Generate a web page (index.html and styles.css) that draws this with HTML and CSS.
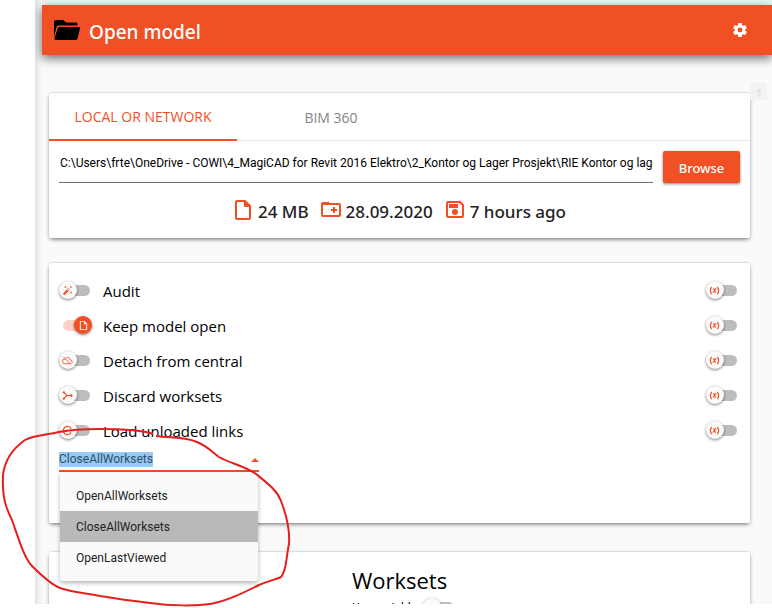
FILE: index.html
```html
<!DOCTYPE html>
<html lang="en">
<head>
<meta charset="utf-8">
<title>Open model</title>
<link rel="stylesheet" href="styles.css">
</head>
<body>
<svg class="sprite" aria-hidden="true">
  <symbol id="file" viewBox="0 0 24 24"><path fill-rule="evenodd" d="M6 2h8l6 6v12a2 2 0 0 1-2 2H6a2 2 0 0 1-2-2V4a2 2 0 0 1 2-2zm0 2v16h12V9h-5V4z"/></symbol>
  <symbol id="wand" viewBox="0 0 24 24"><path d="M7.500 5.600 5 7l1.400-2.500L5 2l2.500 1.400L10 2 8.600 4.500 10 7zM19.500 15.400 22 14l-1.400 2.500L22 19l-2.500-1.400L17 19l1.400-2.500L17 14zM22 2l-1.400 2.500L22 7l-2.500-1.400L17 7l1.400-2.500L17 2l2.500 1.400zM13.300 12.800l2.500-2.500-2.100-2.100-2.500 2.500zm1-5.500 2.400 2.400c.4.400.4 1 0 1.400L5.700 21.700c-.4.400-1 .4-1.400 0l-2-2c-.4-.4-.4-1 0-1.400L13 7.300c.3-.4.900-.4 1.300 0z"/></symbol>
  <symbol id="cloud" viewBox="0 0 24 24"><path fill="none" stroke="currentColor" stroke-width="2" d="M7.500 9H6a5 5 0 0 0 0 10h11M9.500 5.600A6.500 6.500 0 0 1 18.300 11a4 4 0 0 1 2.500 7M3 4l17 17"/></symbol>
  <symbol id="branch" viewBox="0 0 24 24"><path fill="none" stroke="currentColor" stroke-width="2.500" d="M4 5l7 7-7 7M11 12h9"/><circle cx="4" cy="5" r="2.500"/><circle cx="4" cy="19" r="2.500"/><circle cx="20" cy="12" r="3"/></symbol>
  <symbol id="reload" viewBox="0 0 24 24"><path fill="none" stroke="currentColor" stroke-width="2.500" d="M20 8a9 9 0 1 0 0 8M7 12h10"/></symbol>
  <symbol id="variable" viewBox="0 0 24 24"><path fill="none" stroke="currentColor" stroke-width="2.500" d="M6 4q-6 8 0 16M18 4q6 8 0 16M9 8q2 0 3 4t3 4M16 8q-2 0-4 4t-4 4"/></symbol>
</svg>

<div class="window">
  <header class="app-bar">
    <svg class="folder" viewBox="0 0 28 22" aria-hidden="true"><path d="M3 1h7.500l2.500 2.500h10A1.500 1.500 0 0 1 24.500 5v1.500H5.500a2 2 0 0 0-2 1.500L1 18V3a2 2 0 0 1 2-2z"/><path d="M6.500 8H26a1 1 0 0 1 1 1.300l-2.400 10.200A2 2 0 0 1 22.700 21H3a1.500 1.500 0 0 1-1.400-2L4.700 9.300A2 2 0 0 1 6.500 8z"/></svg>
    <h1 class="title">Open model</h1>
    <button class="icon-button" type="button" aria-label="Settings">
      <svg class="gear" viewBox="2 2 20 20" aria-hidden="true"><path d="M12 15.500A3.500 3.500 0 1 1 12 8.500a3.500 3.500 0 0 1 0 7m7.430-2.530c.04-.32.070-.64.070-.970s-.03-.66-.07-1l2.110-1.630c.19-.15.240-.42.120-.64l-2-3.460c-.12-.22-.39-.31-.61-.22l-2.490 1c-.52-.39-1.060-.73-1.690-.980l-.37-2.650A.5.500 0 0 0 14 2h-4c-.25 0-.46.180-.5.420l-.37 2.650c-.63.250-1.170.590-1.690.980l-2.490-1c-.22-.09-.49 0-.61.220l-2 3.460c-.13.220-.07.490.12.640L4.570 11c-.04.340-.07.670-.07 1s.03.650.07.970l-2.110 1.660c-.19.150-.25.420-.12.640l2 3.460c.12.220.39.300.61.220l2.490-1.010c.52.400 1.060.740 1.690.990l.37 2.650c.04.240.25.420.5.420h4c.25 0 .46-.18.500-.42l.37-2.650c.63-.26 1.170-.59 1.690-.99l2.490 1.010c.22.080.49 0 .61-.22l2-3.460c.12-.22.070-.49-.12-.64z"/></svg>
    </button>
  </header>

  <div class="scroller">
    <main class="content">
      <section class="card">
        <nav class="tabs">
          <button class="tab active" type="button">LOCAL OR NETWORK</button>
          <button class="tab" type="button">BIM 360</button>
        </nav>
        <div class="path-row">
          <input class="path" type="text" aria-label="Model path" value="C:\Users\frte\OneDrive - COWI\4_MagiCAD for Revit 2016 Elektro\2_Kontor og Lager Prosjekt\RIE Kontor og lager.rvt">
          <button class="browse" type="button">Browse</button>
        </div>
        <div class="facts">
          <span class="fact"><svg class="fact-icon" viewBox="0 0 20 20" aria-hidden="true"><path fill="none" stroke="currentColor" stroke-width="2" d="M4 1h8l5 5v12a1 1 0 0 1-1 1H4a1 1 0 0 1-1-1V2a1 1 0 0 1 1-1z"/><path d="M11 1v6h6z"/></svg>24 MB</span>
          <span class="fact"><svg class="fact-icon" viewBox="0 0 20 20" aria-hidden="true"><path fill="none" stroke="currentColor" stroke-width="2" d="M2 4h16a1 1 0 0 1 1 1v10a1 1 0 0 1-1 1H2a1 1 0 0 1-1-1V4zM10 10h6M13 7v6"/><path d="M1 2h7l2 3H1z"/></svg>28.09.2020</span>
          <span class="fact"><svg class="fact-icon" viewBox="0 0 20 20" aria-hidden="true"><path fill="none" stroke="currentColor" stroke-width="2" d="M3 2h12l3 3v11a1 1 0 0 1-1 1H3a1 1 0 0 1-1-1V3a1 1 0 0 1 1-1z"/><path d="M4 4h9v4H4z"/><circle cx="10" cy="12" r="3"/></svg>7 hours ago</span>
        </div>
      </section>

      <section class="card options">
        <div class="option">
          <label class="switch-label"><span class="switch"><input type="checkbox"><svg class="glyph" aria-hidden="true"><use href="#wand"/></svg></span>Audit</label>
          <label class="switch"><input type="checkbox" aria-label="Use variable for audit"><svg class="glyph" aria-hidden="true"><use href="#variable"/></svg></label>
        </div>
        <div class="option">
          <label class="switch-label"><span class="switch"><input type="checkbox" checked><svg class="glyph" aria-hidden="true"><use href="#file"/></svg></span>Keep model open</label>
          <label class="switch"><input type="checkbox" aria-label="Use variable for keep model open"><svg class="glyph" aria-hidden="true"><use href="#variable"/></svg></label>
        </div>
        <div class="option">
          <label class="switch-label"><span class="switch"><input type="checkbox"><svg class="glyph" aria-hidden="true"><use href="#cloud"/></svg></span>Detach from central</label>
          <label class="switch"><input type="checkbox" aria-label="Use variable for detach"><svg class="glyph" aria-hidden="true"><use href="#variable"/></svg></label>
        </div>
        <div class="option">
          <label class="switch-label"><span class="switch"><input type="checkbox"><svg class="glyph" aria-hidden="true"><use href="#branch"/></svg></span>Discard worksets</label>
          <label class="switch"><input type="checkbox" aria-label="Use variable for discard worksets"><svg class="glyph" aria-hidden="true"><use href="#variable"/></svg></label>
        </div>
        <div class="option">
          <label class="switch-label"><span class="switch"><input type="checkbox"><svg class="glyph" aria-hidden="true"><use href="#reload"/></svg></span>Load unloaded links</label>
          <label class="switch"><input type="checkbox" aria-label="Use variable for load links"><svg class="glyph" aria-hidden="true"><use href="#variable"/></svg></label>
        </div>
        <div class="combo">
          <select class="combo-field" aria-label="Worksets to open">
            <option>OpenAllWorksets</option>
            <option selected>CloseAllWorksets</option>
            <option>OpenLastViewed</option>
          </select>
          <svg class="caret" viewBox="0 0 8 4" aria-hidden="true"><path d="M4 0l4 4H0z"/></svg>
          <div class="menu">
            <button class="menu-item" type="button">OpenAllWorksets</button>
            <button class="menu-item current" type="button">CloseAllWorksets</button>
            <button class="menu-item" type="button">OpenLastViewed</button>
          </div>
        </div>
      </section>

      <section class="card worksets">
        <div class="worksets-body">
          <h2 class="worksets-title">Worksets</h2>
          <label class="worksets-toggle">Use variable<span class="switch"><input type="checkbox"></span></label>
        </div>
      </section>
    </main>
    <div class="rail">
      <button class="scroll-up" type="button" aria-label="Scroll up"><svg class="arrow" viewBox="0 0 10 10" aria-hidden="true"><path d="M5 9V2M2 5l3-3 3 3"/></svg></button>
    </div>
  </div>
</div>

<svg class="annotation" viewBox="0 0 300 190" aria-hidden="true"><path d="M153 14C142 10 125 9 100 9C82 9 69 10 59 12C47 15 34 15 25 20C15 27 5 38 3 55C2 78 6 88 12 100C18 117 24 138 32 146C38 152 50 164 60 168C75 173 86 173 100 176C118 179 133 181 150 183C171 186 197 186 210 184C227 181 243 173 259 165C268 161 277 159 281 157C287 150 286 137 289 124C290 111 286 94 281 81C277 70 267 63 256 54C245 46 229 43 219 37C211 31 207 26 197 22C186 17 171 18 156 16"/></svg>
</body>
</html>
```

FILE: styles.css
```css
* {
  box-sizing: border-box;
}

body {
  margin: 0;
  height: 100vh;
  overflow: hidden;
  position: relative;
  padding: 0 0 4px 35px;
  background: #fff;
  color: #000;
  font: 15px/20px "Open Sans", "Noto Sans", sans-serif;
}

button,
input,
select {
  font: inherit;
  color: inherit;
  border: 0;
  margin: 0;
  padding: 0;
  background: none;
}

svg {
  fill: currentColor;
}

.sprite {
  position: absolute;
  width: 0;
  height: 0;
}

.window {
  display: flex;
  flex-direction: column;
  height: 100%;
  overflow: hidden;
  padding: 5px 0 0 7px;
  background: #fafafa;
  box-shadow: inset 5px 0 5px -2px #e0e0e0;
}

.app-bar {
  display: flex;
  align-items: center;
  flex: none;
  height: 50px;
  padding: 0 25px 0 11px;
  background: #f15025;
  color: #fff;
  box-shadow: 0 3px 10px rgba(0, 0, 0, 0.6);
}

.folder {
  width: 28px;
  height: 22px;
  color: #000;
}

.title,
.facts,
.browse {
  font-family: "Noto Sans", "Open Sans", sans-serif;
  font-weight: 500;
}

.title {
  margin: 3px 0 0 8px;
  font-size: 19px;
  line-height: 26px;
}

.icon-button {
  display: flex;
  margin-left: auto;
}

.gear {
  width: 14px;
  height: 14px;
}

.scroller {
  display: flex;
  flex: 1;
  min-height: 0;
}

.content {
  display: flex;
  flex-direction: column;
  flex: 1;
  min-width: 0;
  gap: 25px;
  padding: 38px 0 0 7px;
}

.rail {
  width: 22px;
  padding: 28px 0 0;
}

.scroll-up {
  display: flex;
  align-items: center;
  justify-content: center;
  width: 17px;
  height: 17px;
  background: #f3f3f3;
}

.arrow {
  width: 10px;
  height: 10px;
  fill: none;
  stroke: #dcdcdc;
  stroke-width: 1;
}

.card {
  flex: none;
  background: #fff;
  border-radius: 2px;
  box-shadow: 0 2px 4px -1px rgba(0, 0, 0, 0.6), 0 -1px 2px -1px rgba(0, 0, 0, 0.3);
}

.tabs {
  display: flex;
  height: 48px;
  border-bottom: 1px solid #e8e8e8;
}

.tab {
  width: 188px;
  height: 48px;
  padding-top: 2px;
  font-size: 14px;
  color: #858585;
}

.tab.active {
  color: #f15025;
  border-bottom: 2px solid #f15025;
}

.path-row {
  display: flex;
  gap: 10px;
  padding: 10px 10px 0;
}

.path {
  flex: 1;
  min-width: 0;
  height: 32px;
  padding: 0 0 8px 1px;
  border-bottom: 1px solid #707070;
  font-family: Roboto, "Noto Sans", sans-serif;
  font-size: 12px;
}

.browse {
  width: 77px;
  height: 32px;
  padding-top: 2px;
  border-radius: 2px;
  background: #f15025;
  color: #fff;
  font-size: 13px;
  box-shadow: 0 1px 3px rgba(0, 0, 0, 0.5);
}

.facts {
  display: flex;
  justify-content: center;
  gap: 12px;
  padding: 16px 0 14px;
  color: #222;
  font-size: 17px;
  line-height: 25px;
}

.fact {
  display: flex;
  gap: 5px;
}

.fact-icon {
  width: 20px;
  height: 20px;
  margin-top: 1px;
  color: #f15025;
}

.options {
  padding: 10px 12px 51px 10px;
}

.option {
  display: flex;
  align-items: center;
  justify-content: space-between;
  height: 35px;
}

.switch-label {
  display: flex;
  align-items: center;
  gap: 12px;
}

.switch {
  position: relative;
  display: block;
  width: 32px;
  height: 20px;
}

.switch input {
  appearance: none;
  display: block;
  width: 27px;
  height: 11px;
  margin: 4px 0 0 4px;
  border-radius: 6px;
  background: #bdbdbd;
}

.switch::before {
  content: "";
  position: absolute;
  top: 0;
  left: 0;
  width: 18px;
  height: 18px;
  border-radius: 50%;
  background: #fafafa;
  box-shadow: 0 1px 3px rgba(0, 0, 0, 0.5);
}

.glyph {
  position: absolute;
  top: 4px;
  left: 3px;
  width: 11px;
  height: 11px;
  color: #f15025;
}

.switch:has(input:checked)::before {
  left: 15px;
  background: #f15025;
}

.switch input:checked {
  background: #ffd3c7;
}

.switch input:checked + .glyph {
  left: 19px;
  color: #fff;
}

.combo {
  position: relative;
  display: flex;
  align-items: center;
  width: 200px;
  height: 23px;
  margin-top: 1px;
  border-bottom: 2px solid #f15025;
  font-family: Roboto, "Noto Sans", sans-serif;
  font-size: 12px;
}

.combo-field {
  appearance: none;
  width: 100%;
  height: 15px;
  line-height: 15px;
  color: #2a4f72;
  background: linear-gradient(#99c9ef, #99c9ef) no-repeat 0 0 / 94px 100%;
}

.caret {
  position: absolute;
  right: 0;
  width: 8px;
  height: 4px;
  color: #f15025;
}

.menu {
  position: absolute;
  top: 23px;
  left: 1px;
  z-index: 1;
  width: 198px;
  padding: 8px 0;
  border-radius: 0 0 3px 3px;
  background: #fafafa;
  box-shadow: 0 2px 4px rgba(0, 0, 0, 0.3);
}

.menu-item {
  display: block;
  width: 100%;
  height: 31px;
  padding-left: 16px;
  text-align: left;
  color: #222;
}

.menu-item.current {
  background: #b9b9b9;
}

.worksets {
  display: flex;
  justify-content: center;
  margin-top: 4px;
  padding: 14px 0 20px 8px;
}

.worksets-title {
  margin: 0;
  font-size: 22px;
  line-height: 28px;
  font-weight: 400;
}

.worksets-toggle {
  display: flex;
  gap: 6px;
  padding-top: 4px;
  font-family: Roboto, "Noto Sans", sans-serif;
  font-size: 12px;
}

.annotation {
  position: absolute;
  left: 0;
  top: 420px;
  z-index: 2;
  width: 300px;
  height: 190px;
  fill: none;
  stroke: #e81e1e;
  stroke-width: 2;
  pointer-events: none;
}
```
